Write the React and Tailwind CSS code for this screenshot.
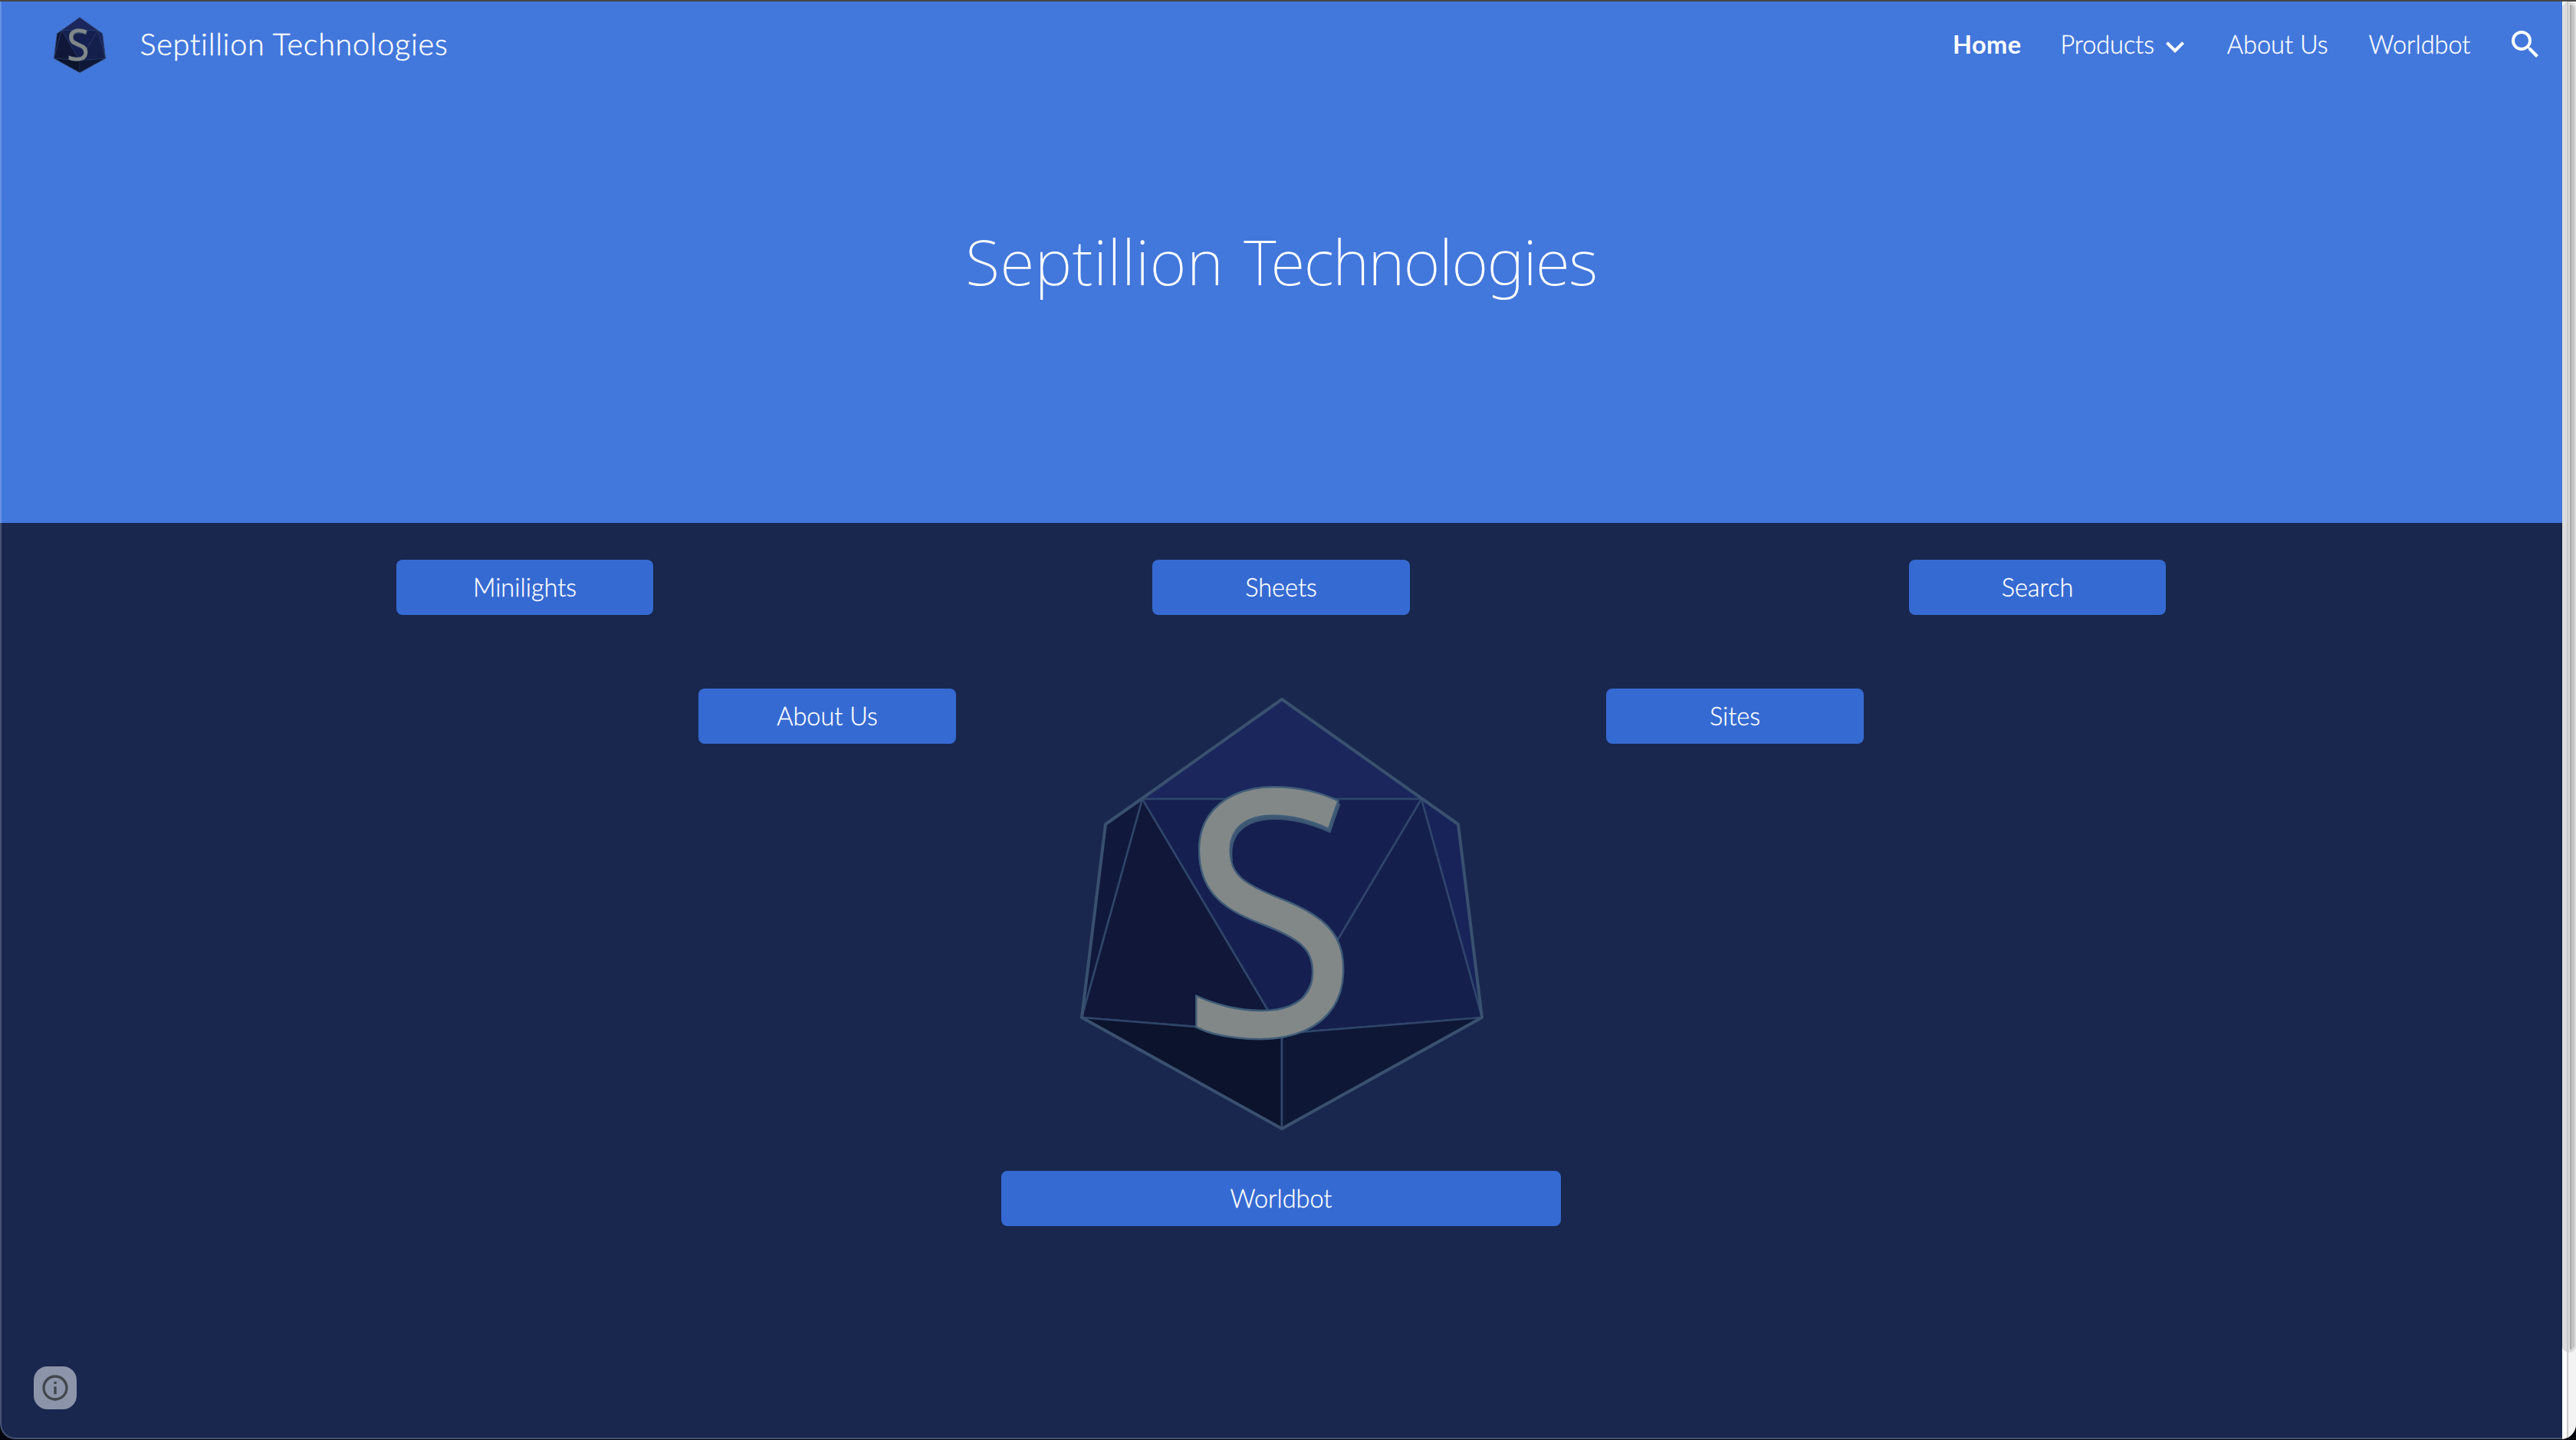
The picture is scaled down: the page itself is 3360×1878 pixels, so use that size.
import { MdSearch, MdExpandMore, MdInfoOutline } from "react-icons/md";

const FACES = [
  ["264,4 446,134 82,134", "#1a265c"],
  ["34,167 82,134 3,419", "#10183b"],
  ["494,167 446,134 525,419", "#18235a"],
  ["82,134 264,440 3,419", "#101739"],
  ["446,134 525,419 264,440", "#151f4c"],
  ["82,134 446,134 264,440", "#162050"],
  ["3,419 264,440 264,564", "#0c132d"],
  ["525,419 264,440 264,564", "#0e1736"],
];

function Logo({ className }) {
  return (
    <svg viewBox="0 0 528 564" className={`overflow-visible ${className}`} aria-label="Septillion logo">
      <defs>
        <clipPath id="upper-curve">
          <rect x="0" y="0" width="528" height="215" />
        </clipPath>
      </defs>
      {FACES.map(([points, fill]) => (
        <polygon key={points} points={points} fill={fill} stroke="#2f456a" strokeWidth="2.6" strokeLinejoin="round" />
      ))}
      <polygon points="264,4 494,167 525,419 264,564 3,419 34,167" fill="none" stroke="#3a506f" strokeWidth="4" strokeLinejoin="round" />
      <g fontFamily="'Noto Sans', sans-serif" fontSize="445" fontWeight="450">
        <g clipPath="url(#upper-curve)">
          <text transform="translate(134 446) scale(0.945 1)" fill="#45596a" stroke="#3c5572" strokeWidth="4">S</text>
        </g>
        <text transform="translate(132 441.5) scale(0.945 1)" fill="#828788" stroke="#3f5c78" strokeWidth="5" paintOrder="stroke">S</text>
      </g>
    </svg>
  );
}

function Button({ children, className = "w-[336px]" }) {
  return (
    <a className={`flex h-[72px] items-center justify-center rounded-lg bg-[#356ad2] text-[32.5px] [-webkit-text-stroke:0.3px] ${className}`}>
      {children}
    </a>
  );
}

function Header() {
  return (
    <header className="flex h-28 items-center pl-[70px] pr-6">
      <Logo className="h-[73px] w-[68px]" />
      <span className="ml-[44.5px] pb-0.5 text-[39.5px] leading-[48px] tracking-[0.75px] [-webkit-text-stroke:0.4px]">
        Septillion Technologies
      </span>
      <nav className="ml-auto flex items-center text-[32.5px] leading-[48px] [-webkit-text-stroke:0.3px]">
        <a className="font-bold tracking-[0.4px] [-webkit-text-stroke:0]">Home</a>
        <a className="ml-[51px] flex items-center">
          <span className="tracking-[-0.1px]">Products</span>
          <MdExpandMore className="relative top-[3px] ml-[3px] size-12" />
        </a>
        <a className="ml-11">About Us</a>
        <a className="ml-[53px]">Worldbot</a>
        <MdSearch className="ml-[47.5px] size-12" />
      </nav>
    </header>
  );
}

function Scrollbar() {
  return (
    <div className="relative h-full w-[18px] bg-white">
      <div className="absolute inset-y-0 left-2 right-0 bg-[#f3f3f3]" />
      <div className="absolute inset-x-0 top-0 h-[1762px] overflow-hidden rounded-[9px] bg-[#dcdcdc]">
        <div className="absolute bottom-1 left-2.5 right-0.5 top-1 rounded-r-full border-l-2 border-[#ababab] bg-[#c4c4c4]" />
      </div>
      <div className="absolute inset-y-0 left-1.5 w-0.5 bg-[#cacaca]" />
    </div>
  );
}

export default function App() {
  return (
    <div className="h-[1878px] w-[3360px] overflow-hidden bg-[#04040c] font-['Lato',sans-serif] font-light text-white [font-variant-ligatures:none]">
      <div className="flex h-[1877px] flex-col overflow-hidden rounded-b-[20px]">
        <div className="h-0.5 shrink-0 bg-[#474747]" />
        <div className="flex min-h-0 flex-1">
          <main className="relative flex w-[3342px] flex-col bg-[#19274e]">
            <section className="h-[680px] bg-[#4277dc]">
              <Header />
              <h1 className="mt-[166px] flex justify-center gap-[26px] font-['Noto_Sans',sans-serif] text-[82px] font-[170] leading-[120px]">
                <span className="tracking-[0.6px]">Septillion</span>
                <span className="tracking-[-1.4px]">Technologies</span>
              </h1>
            </section>
            <section className="flex flex-col items-center">
              <div className="mt-12 flex w-[2308px] justify-between">
                <Button className="w-[335px]">Minilights</Button>
                <Button>Sheets</Button>
                <Button className="w-[335px]">Search</Button>
              </div>
              <div className="mt-24 flex w-[1520px] items-start justify-between">
                <Button>About Us</Button>
                <Logo className="ml-0.5 mt-2.5 h-[564px] w-[528px]" />
                <Button>Sites</Button>
              </div>
              <Button className="mt-[55px] w-[730px]">Worldbot</Button>
            </section>
            <button className="absolute bottom-[39px] left-11 flex size-14 items-center justify-center rounded-[18px] bg-[#8c94a9] text-[#41474c]">
              <MdInfoOutline className="size-10" />
            </button>
            <div className="pointer-events-none absolute inset-0 rounded-bl-[20px] border-b-2 border-l-2 border-white/20" />
          </main>
          <Scrollbar />
        </div>
      </div>
    </div>
  );
}
